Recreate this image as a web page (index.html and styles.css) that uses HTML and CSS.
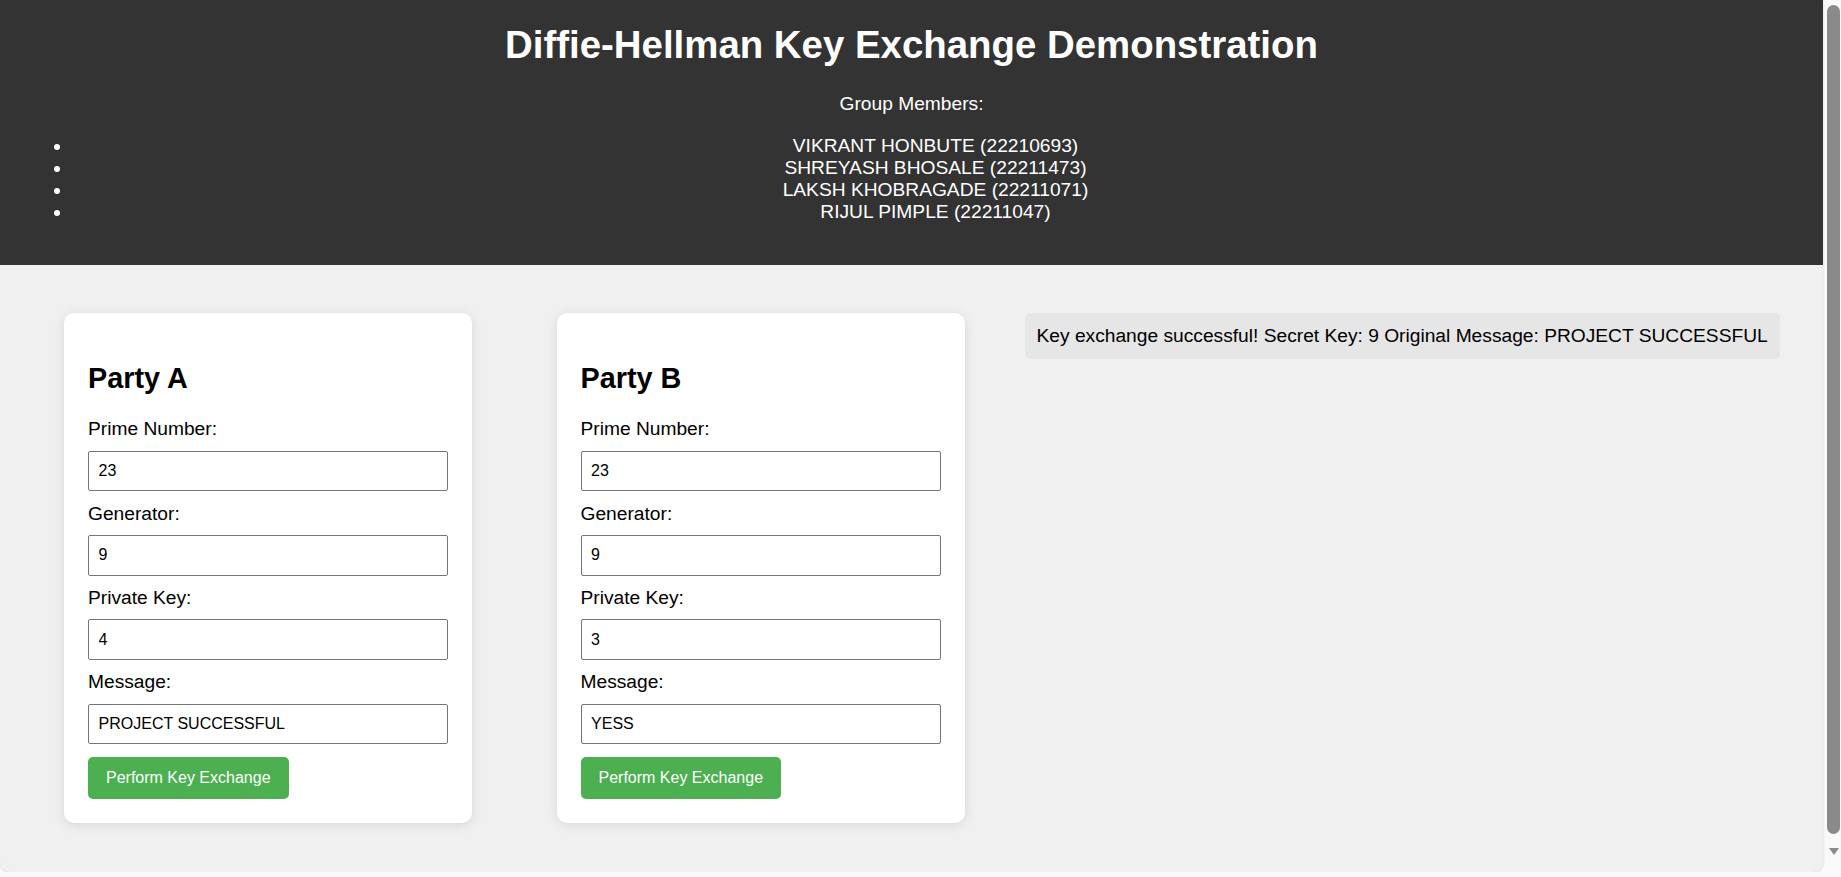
FILE: index.html
```html
<!DOCTYPE html>
<html lang="en">
<head>
<meta charset="utf-8">
<title>Diffie-Hellman Key Exchange Demonstration</title>
<link rel="stylesheet" href="styles.css">
</head>
<body>
<div class="page">
  <header class="hero">
    <h1 class="hero-title">Diffie-Hellman Key Exchange Demonstration</h1>
    <p class="members-heading">Group Members:</p>
    <ul class="members">
      <li>VIKRANT HONBUTE (22210693)</li>
      <li>SHREYASH BHOSALE (22211473)</li>
      <li>LAKSH KHOBRAGADE (22211071)</li>
      <li>RIJUL PIMPLE (22211047)</li>
    </ul>
  </header>
  <main class="main">
    <section class="party party-a">
      <h2 class="party-title">Party A</h2>
      <label class="field-label" for="a-prime">Prime Number:</label>
      <input class="field-input" id="a-prime" type="text" value="23">
      <label class="field-label" for="a-gen">Generator:</label>
      <input class="field-input" id="a-gen" type="text" value="9">
      <label class="field-label" for="a-priv">Private Key:</label>
      <input class="field-input" id="a-priv" type="text" value="4">
      <label class="field-label" for="a-msg">Message:</label>
      <input class="field-input" id="a-msg" type="text" value="PROJECT SUCCESSFUL">
      <button class="exchange-btn" type="button">Perform Key Exchange</button>
    </section>
    <section class="party party-b">
      <h2 class="party-title">Party B</h2>
      <label class="field-label" for="b-prime">Prime Number:</label>
      <input class="field-input" id="b-prime" type="text" value="23">
      <label class="field-label" for="b-gen">Generator:</label>
      <input class="field-input" id="b-gen" type="text" value="9">
      <label class="field-label" for="b-priv">Private Key:</label>
      <input class="field-input" id="b-priv" type="text" value="3">
      <label class="field-label" for="b-msg">Message:</label>
      <input class="field-input" id="b-msg" type="text" value="YESS">
      <button class="exchange-btn" type="button">Perform Key Exchange</button>
    </section>
    <div class="result">Key exchange successful! Secret Key: 9 Original Message: PROJECT SUCCESSFUL</div>
  </main>
</div>
<div class="scrollbar" aria-hidden="true">
  <div class="scrollbar-thumb"></div>
  <div class="scrollbar-arrow"></div>
</div>
</body>
</html>
```

FILE: styles.css
```css
html {
  background: #fafafa;
}

body {
  margin: 0;
  background: #fafafa;
  font-family: "Liberation Sans", Arial, sans-serif;
  font-size: 19.2px;
  color: #000;
  overflow: hidden;
}

.page {
  margin: 0 18px 0 0;
  background: #f0f0f0;
  border-radius: 0 0 10px 10px;
  box-shadow: 0 1px 3px rgba(0, 0, 0, 0.15);
  overflow: hidden;
}

.hero {
  background: #333333;
  color: #ffffff;
  text-align: center;
  padding: 23px 24px 24px;
}

.hero-title {
  font-size: 38.4px;
  font-weight: bold;
  margin: 0 0 26px;
}

.members-heading {
  margin: 0 0 20px;
}

.members {
  margin: 0 0 18px;
  padding-left: 48px;
}

.main {
  display: flex;
  align-items: flex-start;
  padding: 48px 24px 49px 64px;
}

.party {
  width: 408px;
  box-sizing: border-box;
  flex-shrink: 0;
  background: #ffffff;
  border-radius: 10px;
  padding: 24px;
  box-shadow: 0 2px 12px rgba(0, 0, 0, 0.1);
}

.party-a {
  margin-right: 84.5px;
}

.party-b {
  margin-right: 60px;
}

.party-title {
  font-size: 28.8px;
  font-weight: bold;
  margin: 24.5px 0 23.9px;
}

.field-label {
  display: block;
  margin-bottom: 10.5px;
}

.field-input {
  display: block;
  width: 100%;
  height: 40.6px;
  box-sizing: border-box;
  padding: 0 9.6px;
  margin: 0 0 11.2px;
  font-family: "Liberation Sans", Arial, sans-serif;
  font-size: 16px;
  color: #000;
  background: #fff;
  border: 1px solid #767676;
  border-radius: 2px;
}

.exchange-btn {
  display: inline-block;
  vertical-align: top;
  height: 41.7px;
  margin-top: 1.4px;
  padding: 0 18px;
  font-family: "Liberation Sans", Arial, sans-serif;
  font-size: 16px;
  color: #ffffff;
  background: #4caf50;
  border: none;
  border-radius: 5px;
  cursor: pointer;
}

.result {
  background: #e6e6e6;
  padding: 12px;
  border-radius: 5px;
  white-space: nowrap;
}

.scrollbar {
  position: fixed;
  top: 0;
  right: 0;
  width: 15px;
  height: 100%;
  background: #f9f9f9;
  display: flex;
  flex-direction: column;
  align-items: center;
  padding-top: 5px;
  box-sizing: border-box;
}

.scrollbar-thumb {
  width: 13px;
  height: 829px;
  background: #8a8a8a;
  border-radius: 7px;
}

.scrollbar-arrow {
  margin-top: 14px;
  width: 0;
  height: 0;
  border-left: 5px solid transparent;
  border-right: 5px solid transparent;
  border-top: 7px solid #8a8a8a;
}
```
